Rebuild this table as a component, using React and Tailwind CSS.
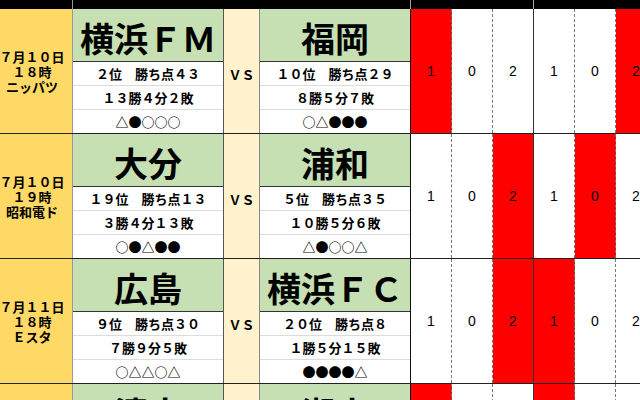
import React from "react";

const jp = { fontFamily: '"Noto Sans CJK JP", "Noto Sans", sans-serif' };

const matches = [
  {
    date: ["７月１０日", "１８時", "ニッパツ"],
    home: { name: "横浜ＦＭ", rank: "２位　勝ち点４３", rec: "１３勝４分２敗", form: "△●○○○" },
    away: { name: "福岡", rank: "１０位　勝ち点２９", rec: "８勝５分７敗", form: "○△●●●" },
    red: [0, 5],
  },
  {
    date: ["７月１０日", "１９時", "昭和電ド"],
    home: { name: "大分", rank: "１９位　勝ち点１３", rec: "３勝４分１３敗", form: "○●△●●" },
    away: { name: "浦和", rank: "５位　勝ち点３５", rec: "１０勝５分６敗", form: "△●○○△" },
    red: [2, 4],
  },
  {
    date: ["７月１１日", "１８時", "Ｅスタ"],
    home: { name: "広島", rank: "９位　勝ち点３０", rec: "７勝９分５敗", form: "○△△○△" },
    away: { name: "横浜ＦＣ", rank: "２０位　勝ち点８", rec: "１勝５分１５敗", form: "●●●●△" },
    red: [2, 3],
  },
  {
    date: ["７月１１日", "１９時", "アイスタ"],
    home: { name: "清水", rank: "１４位　勝ち点２０", rec: "４勝８分９敗", form: "●△○△●" },
    away: { name: "湘南", rank: "１５位　勝ち点２０", rec: "３勝１１分６敗", form: "△△●○△" },
    red: [0, 3],
  },
];

const scores = [1, 0, 2, 1, 0, 2];

function Team({ team, right }) {
  return (
    <div
      className={`w-[151px] shrink-0 flex flex-col border-r ${
        right ? "border-[#111]" : "border-[#555]"
      }`}
      style={jp}
    >
      <div className="h-[53px] bg-[#c6e0b4] border-b border-[#333] flex items-center justify-center pt-[5px] text-[34px] font-bold text-black leading-none">
        {team.name}
      </div>
      <div className="h-[24px] border-b border-[#dcdcdc] flex items-center justify-center text-[13px] font-bold leading-none">
        {team.rank}
      </div>
      <div className="h-[24px] border-b border-[#dcdcdc] flex items-center justify-center text-[13px] font-bold leading-none">
        {team.rec}
      </div>
      <div className="h-[23px] flex items-center justify-center text-[13px] font-bold leading-none">
        {team.form}
      </div>
    </div>
  );
}

function MatchRow({ m }) {
  return (
    <div className="flex h-[125px] border-b border-[#222]">
      <div
        className="w-[81px] shrink-0 bg-[#ffd966] border-r border-[#999] flex flex-col items-center justify-center text-[13px] font-bold leading-[15px]"
        style={jp}
      >
        {m.date.map((d) => (
          <div key={d} className="whitespace-nowrap">
            {d}
          </div>
        ))}
      </div>
      <Team team={m.home} />
      <div
        className="w-[36px] shrink-0 bg-[#fff2cc] border-r border-[#888] flex flex-col"
        style={jp}
      >
        <div className="h-[53px]" />
        <div className="h-[24px] flex items-center justify-center text-[13px] font-bold leading-none">
          ＶＳ
        </div>
      </div>
      <Team team={m.away} right />
      {scores.map((s, i) => (
        <div
          key={i}
          className={`w-[41px] shrink-0 flex items-center justify-center text-[14px] text-black border-r ${
            i === 2 ? "border-solid border-[#333]" : "border-dashed border-[#777]"
          } ${m.red.includes(i) ? "bg-[#ff0000]" : "bg-white"}`}
          style={{ fontFamily: '"Liberation Sans", Arial, sans-serif' }}
        >
          {s}
        </div>
      ))}
    </div>
  );
}

export default function App() {
  return (
    <div className="w-[640px] h-[400px] overflow-hidden bg-white">
      <div className="ml-[-8px] w-[700px]">
        <div className="flex h-[9px] bg-black">
          <div className="w-[81px] shrink-0 border-r border-[#999]" />
          <div className="w-[338px] shrink-0 border-r border-[#999]" />
          <div className="w-[123px] shrink-0 border-r border-[#aaa]" />
          <div className="flex-1" />
        </div>
        {matches.map((m, i) => (
          <MatchRow key={i} m={m} />
        ))}
      </div>
    </div>
  );
}
